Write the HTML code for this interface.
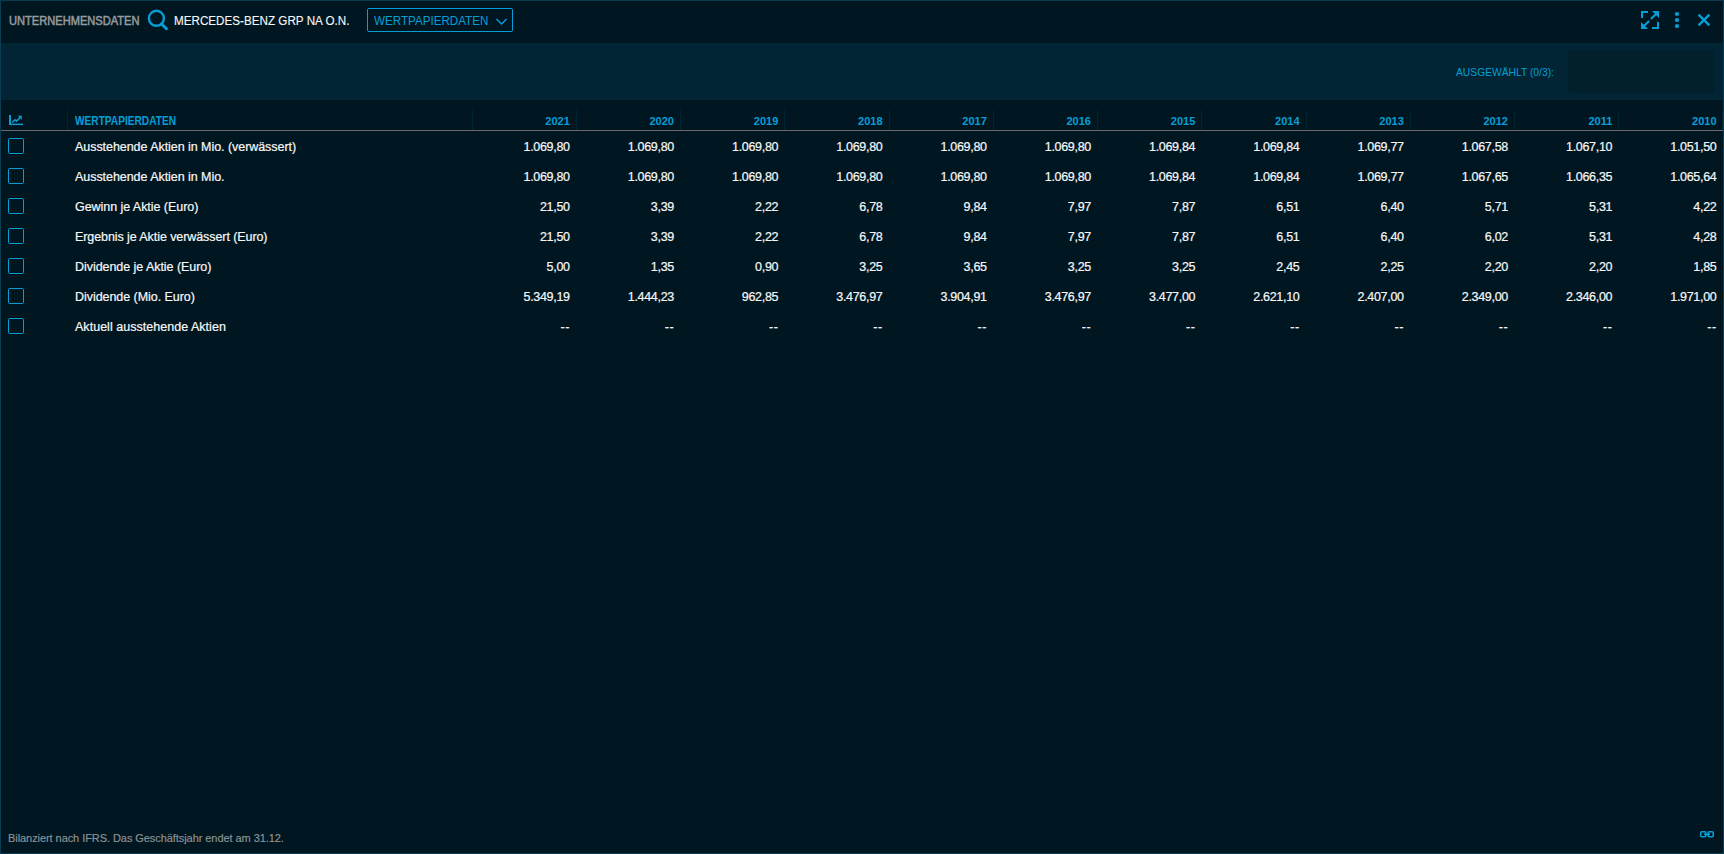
<!DOCTYPE html><html><head><meta charset="utf-8"><title>Wertpapierdaten</title><style>
*{margin:0;padding:0;box-sizing:border-box}
html,body{width:1724px;height:854px;overflow:hidden;background:#001722}
body{position:relative;font-family:"Liberation Sans",sans-serif;}
.a{position:absolute;white-space:nowrap}
.frame{position:absolute;left:0;top:0;width:1724px;height:854px;border:1px solid #0b3b50;pointer-events:none}
.panel{position:absolute;left:1px;top:43px;width:1722px;height:57px;background:#012535}
.selbox{position:absolute;left:1568px;top:50px;width:146px;height:43px;background:#01202c;border-radius:0 0 3px 3px}
.hline{position:absolute;left:1px;top:130px;width:1722px;height:1px;background:#6b6b6b}
.dot{position:absolute;top:110px;height:19px;width:0;border-left:1px dotted #003548}
.t1{font-size:12px;font-weight:400;color:#979b9d;line-height:12px;-webkit-text-stroke:0.5px #979b9d}
.t2{font-size:12.5px;color:#f8f8f8;line-height:12px;-webkit-text-stroke:0.12px #f8f8f8}
.dd{position:absolute;left:367px;top:8px;width:146px;height:24px;border:1px solid #079ed6;border-radius:2px}
.t3{font-size:12.5px;color:#079ed6;line-height:12px}
.hd{font-size:11px;font-weight:700;color:#079ed6;line-height:12px}
.lab{font-size:12.5px;color:#f8f8f8;line-height:12px;-webkit-text-stroke:0.2px #f8f8f8}
.num{font-size:12.5px;color:#f8f8f8;line-height:12px;text-align:right;-webkit-text-stroke:0.2px #f8f8f8}
.cb{position:absolute;left:8px;width:16px;height:16px;border:1.5px solid #079ed6;border-radius:1.5px}
.sel{font-size:11px;color:#079ed6;line-height:12px}
.foot{font-size:11px;color:#8e9498;line-height:12px;-webkit-text-stroke:0.15px #8e9498}
</style></head><body>
<div class="panel"></div><div class="selbox"></div>
<div class="a t1" style="left:9px;top:15px;transform:scaleX(0.925);transform-origin:0 0">UNTERNEHMENSDATEN</div>
<svg class="a" style="left:144px;top:6px" width="28" height="28" viewBox="0 0 28 28"><circle cx="12.4" cy="12.3" r="7.5" fill="none" stroke="#079ed6" stroke-width="2.4"/><line x1="17.6" y1="18" x2="22.4" y2="22.6" stroke="#079ed6" stroke-width="3" stroke-linecap="round"/></svg>
<div class="a t2" style="left:174px;top:15px;transform:scaleX(0.933);transform-origin:0 0">MERCEDES-BENZ GRP NA O.N.</div>
<div class="dd"></div>
<div class="a t3" style="left:374px;top:15px;transform:scaleX(0.93);transform-origin:0 0">WERTPAPIERDATEN</div>
<svg class="a" style="left:494px;top:16px" width="15" height="10" viewBox="0 0 15 10"><polyline points="2.5,3 7.5,8 12.5,3" fill="none" stroke="#079ed6" stroke-width="1.4"/></svg>
<svg class="a" style="left:1638px;top:8px" width="24" height="24" viewBox="0 0 24 24" fill="none" stroke="#079ed6" stroke-width="2">
<polyline points="4,10 4,4 10,4"/>
<polyline points="14,20 20,20 20,14"/>
<line x1="12.9" y1="11.1" x2="19" y2="5" stroke-width="2.1"/><line x1="11.1" y1="12.9" x2="5" y2="19" stroke-width="2.1"/>
<polygon points="14,3 21,3 21,10" fill="#079ed6" stroke="none"/>
<polygon points="3,14 3,21 10,21" fill="#079ed6" stroke="none"/>
</svg>
<svg class="a" style="left:1672px;top:9px" width="10" height="22" viewBox="0 0 10 22" fill="#079ed6"><circle cx="5" cy="5" r="2.1"/><circle cx="5" cy="11.1" r="2.1"/><circle cx="5" cy="17.1" r="2.1"/></svg>
<svg class="a" style="left:1694px;top:10px" width="20" height="20" viewBox="0 0 20 20" stroke="#079ed6" stroke-width="2.4" stroke-linecap="round"><line x1="5.3" y1="5.3" x2="14.7" y2="14.7"/><line x1="14.7" y1="5.3" x2="5.3" y2="14.7"/></svg>
<div class="a sel" style="left:1456px;top:66px;transform:scaleX(0.935);transform-origin:0 0">AUSGEWÄHLT (0/3):</div>
<div class="hline"></div>
<svg class="a" style="left:6px;top:110px" width="22" height="20" viewBox="0 0 22 20" fill="none" stroke="#079ed6">
<line x1="4" y1="5" x2="4" y2="15" stroke-width="2"/><line x1="3" y1="14.35" x2="17" y2="14.35" stroke-width="1.4"/>
<polyline points="6.2,12.6 9,9.7 10.5,11.1 14.6,6.9" stroke-width="1.5"/>
<polygon points="11.8,5.8 15.8,5.8 15.8,9.8" fill="#079ed6" stroke="none"/>
</svg>
<div class="dot" style="left:67px"></div>
<div class="dot" style="left:1722px"></div>
<div class="a hd" style="left:75px;top:115px;font-size:12px;transform:scaleX(0.845);transform-origin:0 0">WERTPAPIERDATEN</div>
<div class="dot" style="left:472px"></div>
<div class="a hd" style="left:472.0px;width:97.8px;top:115px;text-align:right">2021</div>
<div class="dot" style="left:576px"></div>
<div class="a hd" style="left:576.2px;width:97.8px;top:115px;text-align:right">2020</div>
<div class="dot" style="left:680px"></div>
<div class="a hd" style="left:680.5px;width:97.8px;top:115px;text-align:right">2019</div>
<div class="dot" style="left:784px"></div>
<div class="a hd" style="left:784.8px;width:97.8px;top:115px;text-align:right">2018</div>
<div class="dot" style="left:889px"></div>
<div class="a hd" style="left:889.0px;width:97.8px;top:115px;text-align:right">2017</div>
<div class="dot" style="left:993px"></div>
<div class="a hd" style="left:993.2px;width:97.8px;top:115px;text-align:right">2016</div>
<div class="dot" style="left:1097px"></div>
<div class="a hd" style="left:1097.5px;width:97.8px;top:115px;text-align:right">2015</div>
<div class="dot" style="left:1201px"></div>
<div class="a hd" style="left:1201.8px;width:97.8px;top:115px;text-align:right">2014</div>
<div class="dot" style="left:1306px"></div>
<div class="a hd" style="left:1306.0px;width:97.8px;top:115px;text-align:right">2013</div>
<div class="dot" style="left:1410px"></div>
<div class="a hd" style="left:1410.2px;width:97.8px;top:115px;text-align:right">2012</div>
<div class="dot" style="left:1514px"></div>
<div class="a hd" style="left:1514.5px;width:97.8px;top:115px;text-align:right">2011</div>
<div class="dot" style="left:1618px"></div>
<div class="a hd" style="left:1618.8px;width:97.8px;top:115px;text-align:right">2010</div>
<div class="cb" style="top:138px"></div>
<div class="a lab" style="left:75px;top:141px;letter-spacing:-0.05px">Ausstehende Aktien in Mio. (verwässert)</div>
<div class="a num" style="left:472.00px;width:97.75px;top:141px;letter-spacing:-0.3px">1.069,80</div>
<div class="a num" style="left:576.25px;width:97.75px;top:141px;letter-spacing:-0.3px">1.069,80</div>
<div class="a num" style="left:680.50px;width:97.75px;top:141px;letter-spacing:-0.3px">1.069,80</div>
<div class="a num" style="left:784.75px;width:97.75px;top:141px;letter-spacing:-0.3px">1.069,80</div>
<div class="a num" style="left:889.00px;width:97.75px;top:141px;letter-spacing:-0.3px">1.069,80</div>
<div class="a num" style="left:993.25px;width:97.75px;top:141px;letter-spacing:-0.3px">1.069,80</div>
<div class="a num" style="left:1097.50px;width:97.75px;top:141px;letter-spacing:-0.3px">1.069,84</div>
<div class="a num" style="left:1201.75px;width:97.75px;top:141px;letter-spacing:-0.3px">1.069,84</div>
<div class="a num" style="left:1306.00px;width:97.75px;top:141px;letter-spacing:-0.3px">1.069,77</div>
<div class="a num" style="left:1410.25px;width:97.75px;top:141px;letter-spacing:-0.3px">1.067,58</div>
<div class="a num" style="left:1514.50px;width:97.75px;top:141px;letter-spacing:-0.3px">1.067,10</div>
<div class="a num" style="left:1618.75px;width:97.75px;top:141px;letter-spacing:-0.3px">1.051,50</div>
<div class="cb" style="top:168px"></div>
<div class="a lab" style="left:75px;top:171px;letter-spacing:-0.05px">Ausstehende Aktien in Mio.</div>
<div class="a num" style="left:472.00px;width:97.75px;top:171px;letter-spacing:-0.3px">1.069,80</div>
<div class="a num" style="left:576.25px;width:97.75px;top:171px;letter-spacing:-0.3px">1.069,80</div>
<div class="a num" style="left:680.50px;width:97.75px;top:171px;letter-spacing:-0.3px">1.069,80</div>
<div class="a num" style="left:784.75px;width:97.75px;top:171px;letter-spacing:-0.3px">1.069,80</div>
<div class="a num" style="left:889.00px;width:97.75px;top:171px;letter-spacing:-0.3px">1.069,80</div>
<div class="a num" style="left:993.25px;width:97.75px;top:171px;letter-spacing:-0.3px">1.069,80</div>
<div class="a num" style="left:1097.50px;width:97.75px;top:171px;letter-spacing:-0.3px">1.069,84</div>
<div class="a num" style="left:1201.75px;width:97.75px;top:171px;letter-spacing:-0.3px">1.069,84</div>
<div class="a num" style="left:1306.00px;width:97.75px;top:171px;letter-spacing:-0.3px">1.069,77</div>
<div class="a num" style="left:1410.25px;width:97.75px;top:171px;letter-spacing:-0.3px">1.067,65</div>
<div class="a num" style="left:1514.50px;width:97.75px;top:171px;letter-spacing:-0.3px">1.066,35</div>
<div class="a num" style="left:1618.75px;width:97.75px;top:171px;letter-spacing:-0.3px">1.065,64</div>
<div class="cb" style="top:198px"></div>
<div class="a lab" style="left:75px;top:201px;letter-spacing:-0.05px">Gewinn je Aktie (Euro)</div>
<div class="a num" style="left:472.00px;width:97.75px;top:201px;letter-spacing:-0.3px">21,50</div>
<div class="a num" style="left:576.25px;width:97.75px;top:201px;letter-spacing:-0.3px">3,39</div>
<div class="a num" style="left:680.50px;width:97.75px;top:201px;letter-spacing:-0.3px">2,22</div>
<div class="a num" style="left:784.75px;width:97.75px;top:201px;letter-spacing:-0.3px">6,78</div>
<div class="a num" style="left:889.00px;width:97.75px;top:201px;letter-spacing:-0.3px">9,84</div>
<div class="a num" style="left:993.25px;width:97.75px;top:201px;letter-spacing:-0.3px">7,97</div>
<div class="a num" style="left:1097.50px;width:97.75px;top:201px;letter-spacing:-0.3px">7,87</div>
<div class="a num" style="left:1201.75px;width:97.75px;top:201px;letter-spacing:-0.3px">6,51</div>
<div class="a num" style="left:1306.00px;width:97.75px;top:201px;letter-spacing:-0.3px">6,40</div>
<div class="a num" style="left:1410.25px;width:97.75px;top:201px;letter-spacing:-0.3px">5,71</div>
<div class="a num" style="left:1514.50px;width:97.75px;top:201px;letter-spacing:-0.3px">5,31</div>
<div class="a num" style="left:1618.75px;width:97.75px;top:201px;letter-spacing:-0.3px">4,22</div>
<div class="cb" style="top:228px"></div>
<div class="a lab" style="left:75px;top:231px;letter-spacing:-0.08px">Ergebnis je Aktie verwässert (Euro)</div>
<div class="a num" style="left:472.00px;width:97.75px;top:231px;letter-spacing:-0.3px">21,50</div>
<div class="a num" style="left:576.25px;width:97.75px;top:231px;letter-spacing:-0.3px">3,39</div>
<div class="a num" style="left:680.50px;width:97.75px;top:231px;letter-spacing:-0.3px">2,22</div>
<div class="a num" style="left:784.75px;width:97.75px;top:231px;letter-spacing:-0.3px">6,78</div>
<div class="a num" style="left:889.00px;width:97.75px;top:231px;letter-spacing:-0.3px">9,84</div>
<div class="a num" style="left:993.25px;width:97.75px;top:231px;letter-spacing:-0.3px">7,97</div>
<div class="a num" style="left:1097.50px;width:97.75px;top:231px;letter-spacing:-0.3px">7,87</div>
<div class="a num" style="left:1201.75px;width:97.75px;top:231px;letter-spacing:-0.3px">6,51</div>
<div class="a num" style="left:1306.00px;width:97.75px;top:231px;letter-spacing:-0.3px">6,40</div>
<div class="a num" style="left:1410.25px;width:97.75px;top:231px;letter-spacing:-0.3px">6,02</div>
<div class="a num" style="left:1514.50px;width:97.75px;top:231px;letter-spacing:-0.3px">5,31</div>
<div class="a num" style="left:1618.75px;width:97.75px;top:231px;letter-spacing:-0.3px">4,28</div>
<div class="cb" style="top:258px"></div>
<div class="a lab" style="left:75px;top:261px;letter-spacing:-0.05px">Dividende je Aktie (Euro)</div>
<div class="a num" style="left:472.00px;width:97.75px;top:261px;letter-spacing:-0.3px">5,00</div>
<div class="a num" style="left:576.25px;width:97.75px;top:261px;letter-spacing:-0.3px">1,35</div>
<div class="a num" style="left:680.50px;width:97.75px;top:261px;letter-spacing:-0.3px">0,90</div>
<div class="a num" style="left:784.75px;width:97.75px;top:261px;letter-spacing:-0.3px">3,25</div>
<div class="a num" style="left:889.00px;width:97.75px;top:261px;letter-spacing:-0.3px">3,65</div>
<div class="a num" style="left:993.25px;width:97.75px;top:261px;letter-spacing:-0.3px">3,25</div>
<div class="a num" style="left:1097.50px;width:97.75px;top:261px;letter-spacing:-0.3px">3,25</div>
<div class="a num" style="left:1201.75px;width:97.75px;top:261px;letter-spacing:-0.3px">2,45</div>
<div class="a num" style="left:1306.00px;width:97.75px;top:261px;letter-spacing:-0.3px">2,25</div>
<div class="a num" style="left:1410.25px;width:97.75px;top:261px;letter-spacing:-0.3px">2,20</div>
<div class="a num" style="left:1514.50px;width:97.75px;top:261px;letter-spacing:-0.3px">2,20</div>
<div class="a num" style="left:1618.75px;width:97.75px;top:261px;letter-spacing:-0.3px">1,85</div>
<div class="cb" style="top:288px"></div>
<div class="a lab" style="left:75px;top:291px;letter-spacing:-0.05px">Dividende (Mio. Euro)</div>
<div class="a num" style="left:472.00px;width:97.75px;top:291px;letter-spacing:-0.3px">5.349,19</div>
<div class="a num" style="left:576.25px;width:97.75px;top:291px;letter-spacing:-0.3px">1.444,23</div>
<div class="a num" style="left:680.50px;width:97.75px;top:291px;letter-spacing:-0.3px">962,85</div>
<div class="a num" style="left:784.75px;width:97.75px;top:291px;letter-spacing:-0.3px">3.476,97</div>
<div class="a num" style="left:889.00px;width:97.75px;top:291px;letter-spacing:-0.3px">3.904,91</div>
<div class="a num" style="left:993.25px;width:97.75px;top:291px;letter-spacing:-0.3px">3.476,97</div>
<div class="a num" style="left:1097.50px;width:97.75px;top:291px;letter-spacing:-0.3px">3.477,00</div>
<div class="a num" style="left:1201.75px;width:97.75px;top:291px;letter-spacing:-0.3px">2.621,10</div>
<div class="a num" style="left:1306.00px;width:97.75px;top:291px;letter-spacing:-0.3px">2.407,00</div>
<div class="a num" style="left:1410.25px;width:97.75px;top:291px;letter-spacing:-0.3px">2.349,00</div>
<div class="a num" style="left:1514.50px;width:97.75px;top:291px;letter-spacing:-0.3px">2.346,00</div>
<div class="a num" style="left:1618.75px;width:97.75px;top:291px;letter-spacing:-0.3px">1.971,00</div>
<div class="cb" style="top:318px"></div>
<div class="a lab" style="left:75px;top:321px;letter-spacing:0.03px">Aktuell ausstehende Aktien</div>
<div class="a num" style="left:472.00px;width:97.75px;top:321px;letter-spacing:0.4px">--</div>
<div class="a num" style="left:576.25px;width:97.75px;top:321px;letter-spacing:0.4px">--</div>
<div class="a num" style="left:680.50px;width:97.75px;top:321px;letter-spacing:0.4px">--</div>
<div class="a num" style="left:784.75px;width:97.75px;top:321px;letter-spacing:0.4px">--</div>
<div class="a num" style="left:889.00px;width:97.75px;top:321px;letter-spacing:0.4px">--</div>
<div class="a num" style="left:993.25px;width:97.75px;top:321px;letter-spacing:0.4px">--</div>
<div class="a num" style="left:1097.50px;width:97.75px;top:321px;letter-spacing:0.4px">--</div>
<div class="a num" style="left:1201.75px;width:97.75px;top:321px;letter-spacing:0.4px">--</div>
<div class="a num" style="left:1306.00px;width:97.75px;top:321px;letter-spacing:0.4px">--</div>
<div class="a num" style="left:1410.25px;width:97.75px;top:321px;letter-spacing:0.4px">--</div>
<div class="a num" style="left:1514.50px;width:97.75px;top:321px;letter-spacing:0.4px">--</div>
<div class="a num" style="left:1618.75px;width:97.75px;top:321px;letter-spacing:0.4px">--</div>
<div class="a foot" style="left:8px;top:832px;letter-spacing:-0.065px">Bilanziert nach IFRS. Das Geschäftsjahr endet am 31.12.</div>
<svg class="a" style="left:1698px;top:829px" width="18" height="10" viewBox="0 0 18 10" fill="none" stroke="#079ed6" stroke-width="1.6">
<rect x="2.8" y="2.8" width="5" height="5" rx="1"/><rect x="10.2" y="2.8" width="5" height="5" rx="1"/><line x1="6" y1="5.3" x2="12" y2="5.3"/>
</svg>
<div class="frame"></div>
</body></html>
